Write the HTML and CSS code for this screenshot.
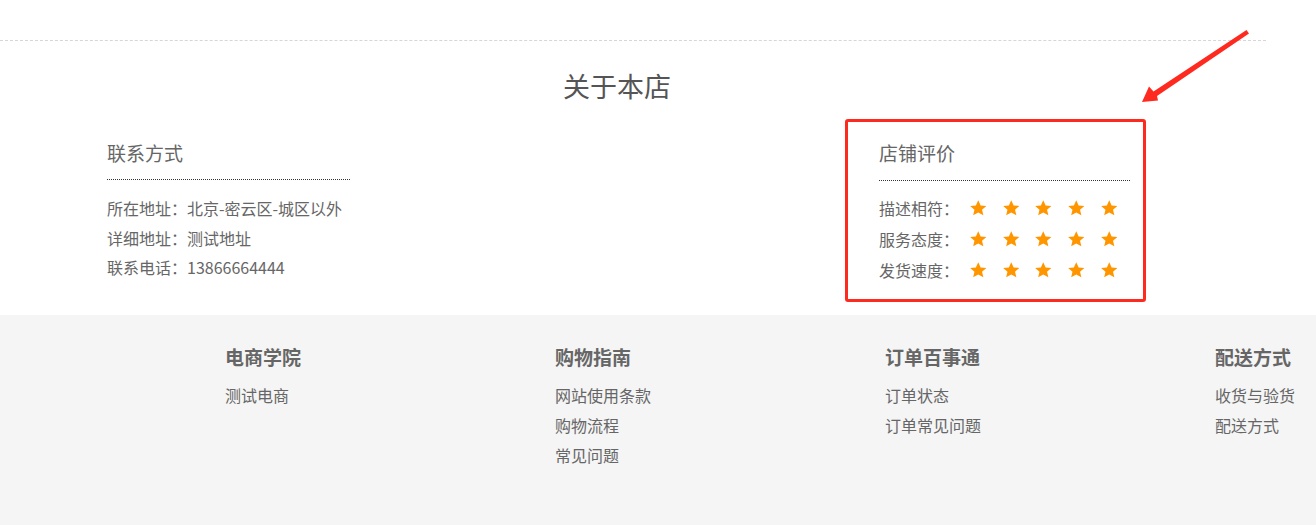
FILE: index.html
```html
<!DOCTYPE html>
<html lang="zh-CN">
<head>
  <meta charset="UTF-8" />
  <title>关于本店</title>
  <link rel="stylesheet" href="styles.css">
</head>
<body>

  <div class="top-line"></div>

  <h2 class="about-title">关于本店</h2>

  <div class="about-body">
    <div class="contact">
      <h3 class="block-title">联系方式</h3>
      <ul class="contact-list">
        <li>所在地址：北京-密云区-城区以外</li>
        <li>详细地址：测试地址</li>
        <li>联系电话：13866664444</li>
      </ul>
    </div>

    <div class="rating">
      <h3 class="block-title">店铺评价</h3>
      <ul class="rating-list">
        <li><span class="rating-label">描述相符：</span><span class="stars" data-n="5"></span></li>
        <li><span class="rating-label">服务态度：</span><span class="stars" data-n="5"></span></li>
        <li><span class="rating-label">发货速度：</span><span class="stars" data-n="5"></span></li>
      </ul>
    </div>
  </div>

  <div class="footer">
    <div class="footer-col">
      <h4>电商学院</h4>
      <a href="#">测试电商</a>
    </div>
    <div class="footer-col">
      <h4>购物指南</h4>
      <a href="#">网站使用条款</a>
      <a href="#">购物流程</a>
      <a href="#">常见问题</a>
    </div>
    <div class="footer-col">
      <h4>订单百事通</h4>
      <a href="#">订单状态</a>
      <a href="#">订单常见问题</a>
    </div>
    <div class="footer-col">
      <h4>配送方式</h4>
      <a href="#">收货与验货</a>
      <a href="#">配送方式</a>
    </div>
  </div>

  <!-- annotation arrow pointing at the rating box -->
  <svg class="arrow" width="1316" height="140" viewBox="0 0 1316 140">
    <polygon points="1142,102 1149,86.5 1153.5,91.5 1246.5,30 1249,33.5 1157,96 1158,100.5" fill="#ff2a1f"/>
  </svg>

  <script>
    var star = '<svg class="star" viewBox="0 0 24 24"><path d="M12 1.5l3.1 6.8 7.4.7-5.6 4.9 1.7 7.3L12 17.4l-6.6 3.8 1.7-7.3L1.5 9l7.4-.7z"/></svg>';
    document.querySelectorAll(".stars").forEach(function (el) {
      var n = +el.getAttribute("data-n");
      el.innerHTML = star.repeat(n);
    });
  </script>
</body>
</html>
```

FILE: styles.css
```css
body {
  margin: 0;
  background: #fff;
  color: #666;
  font-family: "Noto Sans CJK SC", "Noto Sans", sans-serif;
  position: relative;
  height: 525px;
  overflow: hidden;
}

ul {
  list-style: none;
  margin: 0;
  padding: 0;
}

a {
  color: #666;
  text-decoration: none;
}

.top-line {
  width: 1266px;
  height: 40px;
  border-bottom: 1px dashed #d6d6d6;
}

.about-title {
  margin: 27px 0 0 563px;
  font-size: 27px;
  font-weight: normal;
  line-height: 36px;
  color: #555;
}

.about-body {
  display: flex;
  align-items: flex-start;
  padding-left: 107px;
  height: 211px;
}

.contact {
  width: 243px;
  margin-top: 36px;
}

.block-title {
  margin: 0;
  font-size: 19px;
  font-weight: normal;
  line-height: 26px;
  padding-bottom: 13px;
  border-bottom: 1px dotted #333;
  color: #666;
}

.contact-list {
  padding-top: 14px;
  font-size: 16px;
  line-height: 29.5px;
}

.rating {
  margin-left: 495px;
  margin-top: 15px;
  width: 251px;
  height: 177px;
  padding: 0 13px 0 31px;
  border: 3px solid #ff2a1f;
  border-radius: 3px;
}

.rating .block-title {
  margin-top: 18px;
  padding-bottom: 14px;
}

.rating-list {
  padding-top: 12px;
  font-size: 16px;
  line-height: 31px;
}

.rating-list li {
  display: flex;
  align-items: center;
}

.rating-label {
  width: 90px;
  flex-shrink: 0;
}

.stars {
  display: flex;
  gap: 14.2px;
}

.star {
  width: 18.5px;
  height: 18.5px;
  fill: #ff9600;
}

.footer {
  display: flex;
  background: #f5f5f5;
  height: 210px;
  padding: 29px 0 0 225px;
  box-sizing: border-box;
}

.footer-col {
  width: 330px;
  flex-shrink: 0;
  display: flex;
  flex-direction: column;
}

.footer-col:last-child {
  width: auto;
}

.footer-col h4 {
  margin: 0 0 10px;
  font-size: 19px;
  line-height: 26px;
  color: #666;
}

.footer-col a {
  font-size: 16px;
  line-height: 30px;
}

.arrow {
  position: absolute;
  top: 0;
  left: 0;
  pointer-events: none;
}
```
